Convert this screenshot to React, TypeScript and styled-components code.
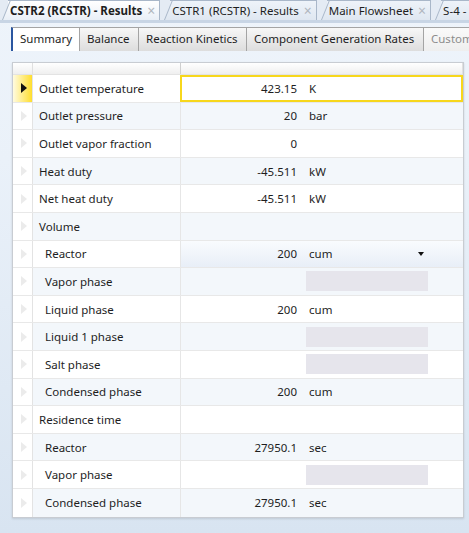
import styled, { createGlobalStyle } from "styled-components";

const GlobalStyle = createGlobalStyle`
  html, body { margin: 0; padding: 0; }
  body {
    font-family: "Noto Sans", "Open Sans", sans-serif;
    font-size: 11.5px;
    color: #1e1e1e;
  }
`;

const Page = styled.div`
  width: 469px;
  height: 533px;
  overflow: hidden;
  display: flex;
  flex-direction: column;
  background: linear-gradient(#eef4fb 0%, #eaf1f9 30%, #d8e4f1 100%);
`;

const DocStrip = styled.div`
  display: flex;
  align-items: flex-end;
  height: 20px;
  padding-left: 8px;
  background: #e4ebf4;
  border-bottom: 3px solid #c8d5e5;
  white-space: nowrap;
`;

const DocTab = styled.div<{ $active?: boolean }>`
  position: relative;
  display: flex;
  align-items: center;
  height: 19px;
  padding: 0 4px 0 2px;
  margin-right: 10px;
  border-top: 1px solid #a9b7c9;
  border-right: 1px solid #a9b7c9;
  background: ${(p) => (p.$active ? "linear-gradient(#ffffff, #e9eff7)" : "linear-gradient(#eef3f9, #dfe7f1)")};
  font-weight: ${(p) => (p.$active ? 700 : 400)};
  font-size: 11.5px;
  z-index: ${(p) => (p.$active ? 2 : 1)};

  &::before {
    content: "";
    position: absolute;
    left: -6px;
    top: -1px;
    bottom: 0;
    width: 10px;
    border-left: 1px solid #a9b7c9;
    border-top: 1px solid #a9b7c9;
    background: inherit;
    transform: skewX(-22deg);
    transform-origin: bottom left;
    z-index: -1;
  }
`;

const Close = styled.span`
  color: #b0b6be;
  margin-left: 5px;
  font-weight: 400;
  font-size: 14px;
  line-height: 14px;
`;

const SubStrip = styled.div`
  display: flex;
  height: 24px;
  padding: 4px 0 0 11px;
  white-space: nowrap;
`;

const SubTab = styled.div<{ $w: number; $active?: boolean; $disabled?: boolean }>`
  flex: none;
  width: ${(p) => p.$w}px;
  padding-left: 7px;
  line-height: 22px;
  font-size: 11.5px;
  border: 1px solid #a4a4a4;
  border-bottom: none;
  border-left: ${(p) => (p.$active ? "2px solid #2a56a0" : "1px solid #a4a4a4")};
  margin-right: -1px;
  background: ${(p) =>
    p.$active ? "#ffffff" : p.$disabled ? "linear-gradient(#fafafa, #eeeeee)" : "linear-gradient(#f7f7f7, #dddddd)"};
  color: ${(p) => (p.$disabled ? "#8c8c8c" : "#1e1e1e")};
  box-sizing: border-box;
`;

const Table = styled.div`
  margin: 11px 0 0 12px;
  width: 452px;
  box-sizing: border-box;
  border: 1px solid #c8ccd2;
  background: #ffffff;
  box-shadow: 0 1px 2px rgba(0, 0, 0, 0.12);
`;

const HeaderRow = styled.div`
  display: grid;
  grid-template-columns: 20px 148px 1fr;
  height: 11px;
  border-bottom: 1px solid #e3e3e3;
  background: linear-gradient(#ffffff, #efefef);

  & > div {
    border-right: 1px solid #e0e0e0;
  }
  & > div:nth-child(2) {
    border-right: 1px solid #cfcfcf;
  }
`;

const Row = styled.div<{ $alt?: boolean }>`
  display: grid;
  grid-template-columns: 20px 148px 1fr;
  height: 27.6px;
  box-sizing: border-box;
  border-bottom: 1px solid #e8e8e8;
  background: ${(p) => (p.$alt ? "#f3f7fb" : "#ffffff")};

  &:last-child {
    border-bottom: none;
  }
`;

const RowHead = styled.div<{ $selected?: boolean }>`
  display: flex;
  align-items: center;
  justify-content: center;
  border-right: 1px solid #e3e3e3;
  background: ${(p) => (p.$selected ? "linear-gradient(to right, #fffbe0, #ffde2e)" : "#ffffff")};
`;

const Arrow = styled.span<{ $selected?: boolean }>`
  width: 0;
  height: 0;
  margin-left: 2px;
  border-top: 5px solid transparent;
  border-bottom: 5px solid transparent;
  border-left: 6px solid ${(p) => (p.$selected ? "#111111" : "#ebebeb")};
`;

const NameCell = styled.div<{ $indent?: boolean }>`
  display: flex;
  align-items: center;
  padding-left: ${(p) => (p.$indent ? 12 : 6)}px;
  border-right: 1px solid #e6e6e6;
  white-space: nowrap;
`;

const ValueCell = styled.div<{ $selected?: boolean; $hover?: boolean }>`
  display: flex;
  align-items: center;
  box-sizing: border-box;
  border: ${(p) => (p.$selected ? "2px solid #f7d71c" : "none")};
  margin: ${(p) => (p.$selected ? "0 0 0 -1px" : "0")};
  background: ${(p) => (p.$hover ? "linear-gradient(#f9fbfe, #e8eef7)" : "transparent")};
`;

const Value = styled.span<{ $selected?: boolean }>`
  width: ${(p) => (p.$selected ? 115 : 116)}px;
  text-align: right;
  flex: none;
`;

const Unit = styled.div<{ $blank?: boolean }>`
  position: relative;
  display: flex;
  align-items: center;
  width: 122px;
  height: 20px;
  margin-left: 9px;
  padding-left: 3px;
  box-sizing: border-box;
  background: ${(p) => (p.$blank ? "#e6e5ec" : "transparent")};
`;

const Caret = styled.span`
  position: absolute;
  right: 4px;
  top: 8px;
  border-left: 3.5px solid transparent;
  border-right: 3.5px solid transparent;
  border-top: 4px solid #111111;
`;

type Item = {
  name: string;
  indent?: boolean;
  value?: string;
  unit?: string;
  blank?: boolean;
  selected?: boolean;
  hover?: boolean;
  caret?: boolean;
  group?: boolean;
};

const items: Item[] = [
  { name: "Outlet temperature", value: "423.15", unit: "K", selected: true },
  { name: "Outlet pressure", value: "20", unit: "bar" },
  { name: "Outlet vapor fraction", value: "0" },
  { name: "Heat duty", value: "-45.511", unit: "kW" },
  { name: "Net heat duty", value: "-45.511", unit: "kW" },
  { name: "Volume", group: true },
  { name: "Reactor", indent: true, value: "200", unit: "cum", hover: true, caret: true },
  { name: "Vapor phase", indent: true, blank: true },
  { name: "Liquid phase", indent: true, value: "200", unit: "cum" },
  { name: "Liquid 1 phase", indent: true, blank: true },
  { name: "Salt phase", indent: true, blank: true },
  { name: "Condensed phase", indent: true, value: "200", unit: "cum" },
  { name: "Residence time", group: true },
  { name: "Reactor", indent: true, value: "27950.1", unit: "sec" },
  { name: "Vapor phase", indent: true, blank: true },
  { name: "Condensed phase", indent: true, value: "27950.1", unit: "sec" },
];

const docTabs = [
  { label: "CSTR2 (RCSTR) - Results", active: true },
  { label: "CSTR1 (RCSTR) - Results" },
  { label: "Main Flowsheet" },
  { label: "S-4 - Results" },
];

const subTabs = [
  { label: "Summary", w: 69, active: true },
  { label: "Balance", w: 60 },
  { label: "Reaction Kinetics", w: 109 },
  { label: "Component Generation Rates", w: 178 },
  { label: "Custom Vars", w: 80, disabled: true },
];

export default function App() {
  return (
    <Page>
      <GlobalStyle />
      <DocStrip>
        {docTabs.map((t) => (
          <DocTab key={t.label} $active={t.active}>
            {t.label}
            <Close>×</Close>
          </DocTab>
        ))}
      </DocStrip>
      <SubStrip>
        {subTabs.map((t) => (
          <SubTab key={t.label} $w={t.w} $active={t.active} $disabled={t.disabled}>
            {t.label}
          </SubTab>
        ))}
      </SubStrip>
      <Table>
        <HeaderRow>
          <div />
          <div />
          <div />
        </HeaderRow>
        {items.map((it, i) => (
          <Row key={i} $alt={i % 2 === 1}>
            <RowHead $selected={it.selected}>
              <Arrow $selected={it.selected} />
            </RowHead>
            <NameCell $indent={it.indent}>{it.name}</NameCell>
            <ValueCell $selected={it.selected} $hover={it.hover}>
              {!it.group && <Value $selected={it.selected}>{it.value}</Value>}
              {!it.group && (it.unit || it.blank) && (
                <Unit $blank={it.blank}>
                  {it.unit}
                  {it.caret && <Caret />}
                </Unit>
              )}
            </ValueCell>
          </Row>
        ))}
      </Table>
    </Page>
  );
}
